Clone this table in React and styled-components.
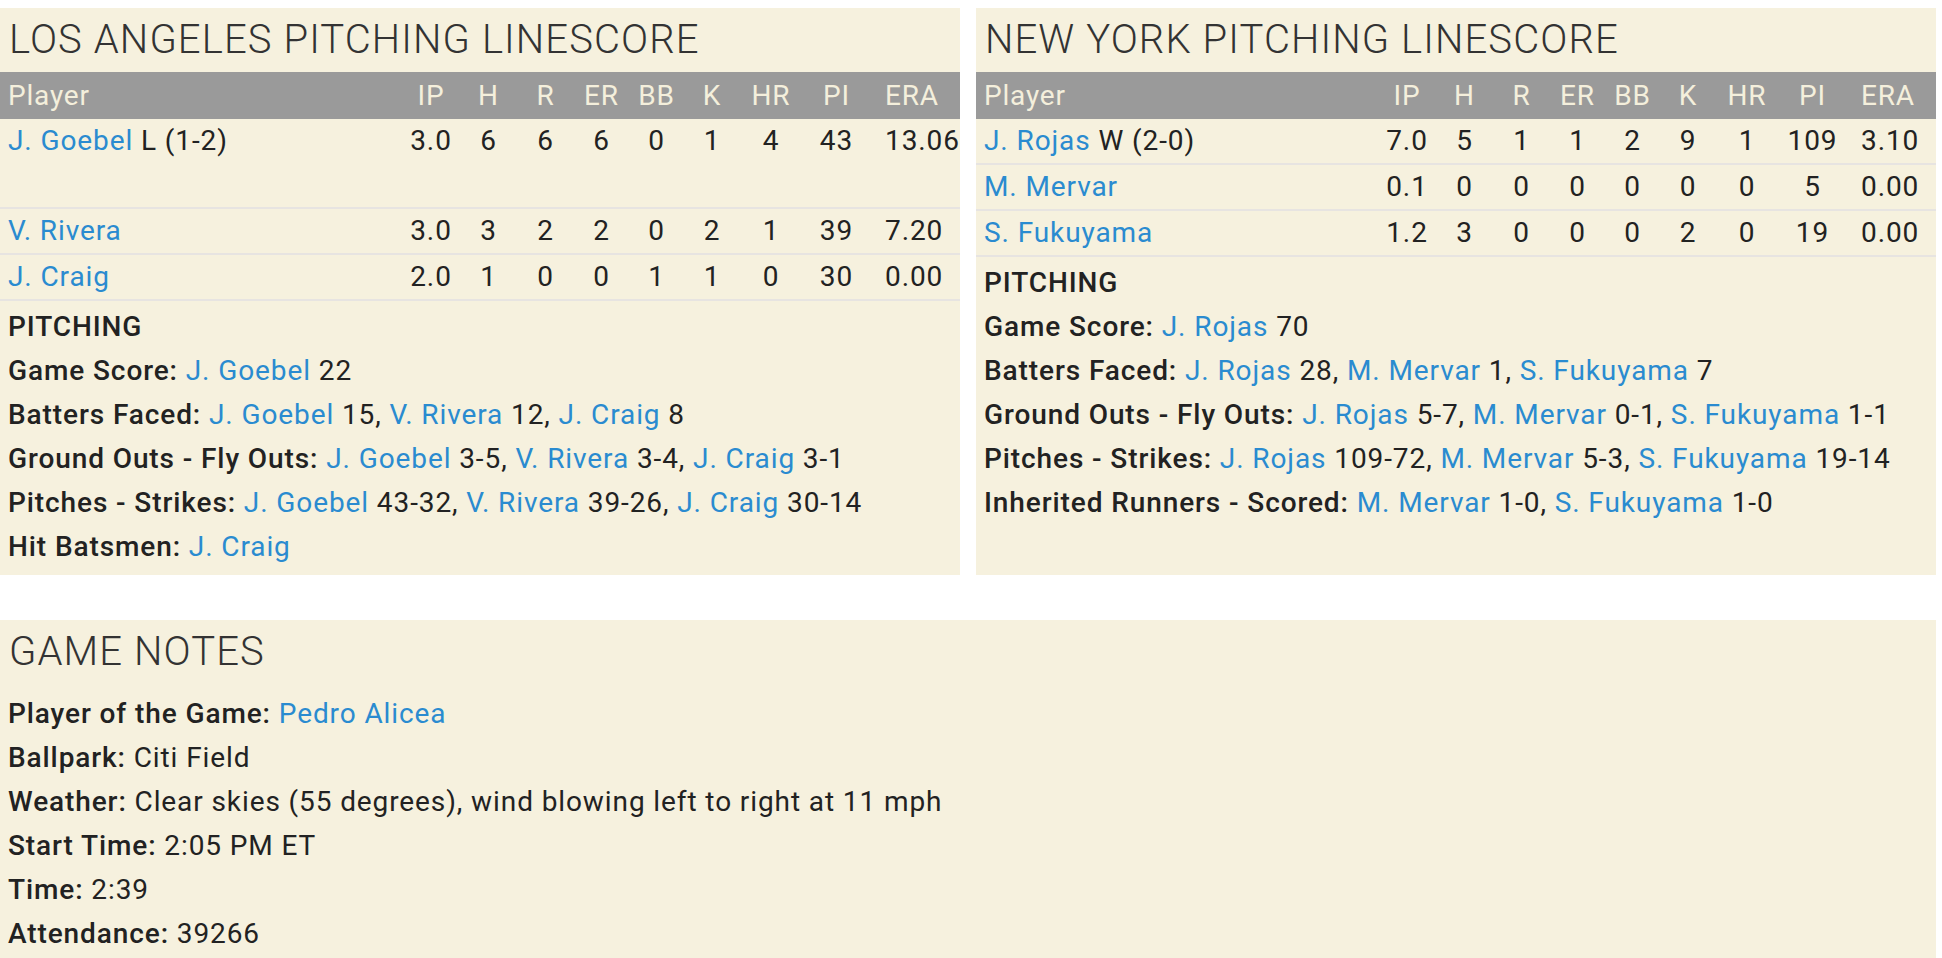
import React from 'react';
import styled, {createGlobalStyle} from 'styled-components';

const GlobalStyle = createGlobalStyle`
  body {
    margin: 8px 6px 0 0;
    background: #ffffff;
    font-family: Roboto, "Noto Sans", sans-serif;
    color: #222222;
  }
`;

const COLS = '1fr 58px 57px 57px 55px 55px 56px 62px 69px 89px';

const Page = styled.div`
  display: flex;
  flex-direction: column;
  gap: 45px;
`;

const TopRow = styled.div`
  display: grid;
  grid-template-columns: 1fr 1fr;
  gap: 16px;
`;

const Panel = styled.section`
  background: #f6f1de;
  padding-top: 8px;
  padding-bottom: 6px;
`;

const Title = styled.h2`
  margin: 0 0 ${p => p.$gap || 9}px;
  padding-left: 9px;
  font-size: 40px;
  font-weight: 300;
  line-height: 47px;
  letter-spacing: 1.1px;
  color: #333333;
`;

const HeadRow = styled.div`
  display: grid;
  grid-template-columns: ${COLS};
  height: 47px;
  line-height: 47px;
  background: #9a9a9a;
  color: #f4efdc;
  font-size: 28px;
  letter-spacing: 0.8px;
`;

const Row = styled.div`
  display: grid;
  grid-template-columns: ${COLS};
  min-height: ${p => (p.$lines || 1) * 44}px;
  line-height: 44px;
  font-size: 28px;
  letter-spacing: 0.9px;
  border-bottom: 2px solid #e7e4e1;
`;

const NameCell = styled.div`
  padding-left: 8px;
  white-space: nowrap;
`;

const StatCell = styled.div`
  text-align: center;
  white-space: nowrap;
  padding: ${p => (p.$last ? '0 21px 0 14px' : '0')};
`;

const PlayerLink = styled.a`
  color: #2a8bd0;
  text-decoration: none;
`;

const Notes = styled.div`
  padding: 4px 8px 0 8px;
  font-size: 28px;
  line-height: 44px;
  letter-spacing: 0.9px;
`;

const NoteLine = styled.div`
  white-space: nowrap;
`;

const Label = styled.span`
  font-weight: 500;
`;

const Heading = styled.div`
  font-weight: 500;
`;

const STATS = ['IP', 'H', 'R', 'ER', 'BB', 'K', 'HR', 'PI', 'ERA'];

const losAngeles = [
  {name: 'J. Goebel', note: 'L (1-2)', lines: 2, stats: ['3.0', '6', '6', '6', '0', '1', '4', '43', '13.06']},
  {name: 'V. Rivera', stats: ['3.0', '3', '2', '2', '0', '2', '1', '39', '7.20']},
  {name: 'J. Craig', stats: ['2.0', '1', '0', '0', '1', '1', '0', '30', '0.00']},
];

const newYork = [
  {name: 'J. Rojas', note: 'W (2-0)', stats: ['7.0', '5', '1', '1', '2', '9', '1', '109', '3.10']},
  {name: 'M. Mervar', stats: ['0.1', '0', '0', '0', '0', '0', '0', '5', '0.00']},
  {name: 'S. Fukuyama', stats: ['1.2', '3', '0', '0', '0', '2', '0', '19', '0.00']},
];

const laNotes = [
  {label: 'Game Score', items: [['J. Goebel', '22']]},
  {label: 'Batters Faced', items: [['J. Goebel', '15'], ['V. Rivera', '12'], ['J. Craig', '8']]},
  {label: 'Ground Outs - Fly Outs', items: [['J. Goebel', '3-5'], ['V. Rivera', '3-4'], ['J. Craig', '3-1']]},
  {label: 'Pitches - Strikes', items: [['J. Goebel', '43-32'], ['V. Rivera', '39-26'], ['J. Craig', '30-14']]},
  {label: 'Hit Batsmen', items: [['J. Craig', '']]},
];

const nyNotes = [
  {label: 'Game Score', items: [['J. Rojas', '70']]},
  {label: 'Batters Faced', items: [['J. Rojas', '28'], ['M. Mervar', '1'], ['S. Fukuyama', '7']]},
  {label: 'Ground Outs - Fly Outs', items: [['J. Rojas', '5-7'], ['M. Mervar', '0-1'], ['S. Fukuyama', '1-1']]},
  {label: 'Pitches - Strikes', items: [['J. Rojas', '109-72'], ['M. Mervar', '5-3'], ['S. Fukuyama', '19-14']]},
  {label: 'Inherited Runners - Scored', items: [['M. Mervar', '1-0'], ['S. Fukuyama', '1-0']]},
];

function PitchLine({label, items}) {
  return (
    <NoteLine>
      <Label>{label}:</Label>{' '}
      {items.map(([who, val], i) => (
        <React.Fragment key={who}>
          <PlayerLink href="#">{who}</PlayerLink>
          {val ? ' ' + val : ''}
          {i < items.length - 1 ? ', ' : ''}
        </React.Fragment>
      ))}
    </NoteLine>
  );
}

function Linescore({team, pitchers, notes}) {
  return (
    <Panel>
      <Title>{team} PITCHING LINESCORE</Title>
      <HeadRow>
        <NameCell>Player</NameCell>
        {STATS.map((s, i) => (
          <StatCell key={s} $last={i === STATS.length - 1}>{s}</StatCell>
        ))}
      </HeadRow>
      {pitchers.map(p => (
        <Row key={p.name} $lines={p.lines}>
          <NameCell>
            <PlayerLink href="#">{p.name}</PlayerLink>
            {p.note ? ' ' + p.note : ''}
          </NameCell>
          {p.stats.map((v, i) => (
            <StatCell key={i} $last={i === p.stats.length - 1}>{v}</StatCell>
          ))}
        </Row>
      ))}
      <Notes>
        <Heading>PITCHING</Heading>
        {notes.map(n => <PitchLine key={n.label} {...n} />)}
      </Notes>
    </Panel>
  );
}

export default function App() {
  return (
    <>
      <GlobalStyle />
      <Page>
        <TopRow>
          <Linescore team="LOS ANGELES" pitchers={losAngeles} notes={laNotes} />
          <Linescore team="NEW YORK" pitchers={newYork} notes={nyNotes} />
        </TopRow>
        <Panel>
          <Title $gap={13}>GAME NOTES</Title>
          <Notes>
            <NoteLine><Label>Player of the Game:</Label> <PlayerLink href="#">Pedro Alicea</PlayerLink></NoteLine>
            <NoteLine><Label>Ballpark:</Label> Citi Field</NoteLine>
            <NoteLine><Label>Weather:</Label> Clear skies (55 degrees), wind blowing left to right at 11 mph</NoteLine>
            <NoteLine><Label>Start Time:</Label> 2:05 PM ET</NoteLine>
            <NoteLine><Label>Time:</Label> 2:39</NoteLine>
            <NoteLine><Label>Attendance:</Label> 39266</NoteLine>
          </Notes>
        </Panel>
      </Page>
    </>
  );
}
